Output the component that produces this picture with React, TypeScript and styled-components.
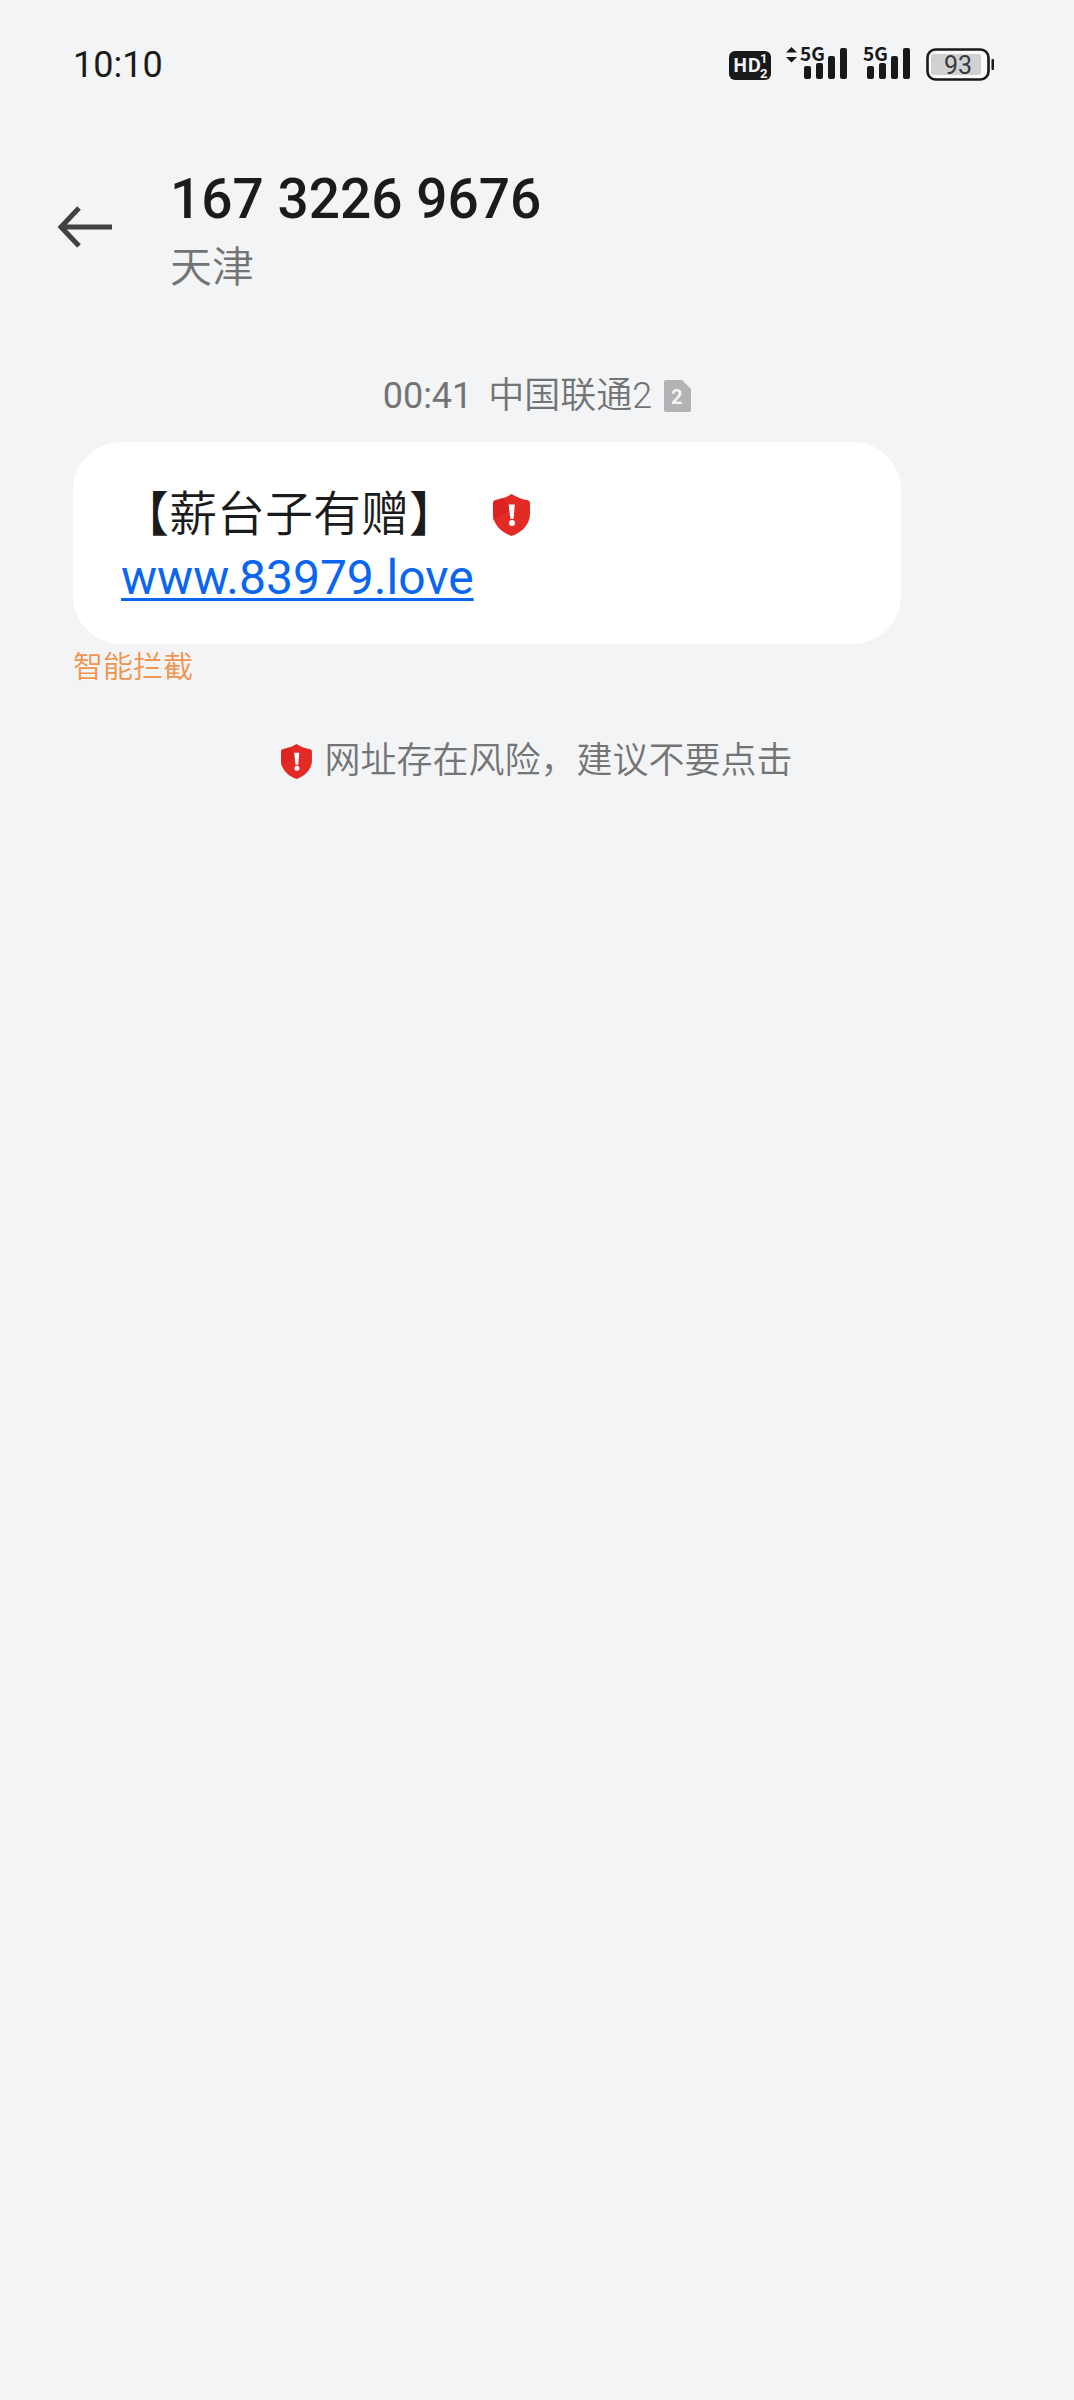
import React from "react";
import styled, { createGlobalStyle } from "styled-components";

const GlobalStyle = createGlobalStyle`
  * { box-sizing: border-box; }
  body {
    margin: 0;
    background: #f2f4f6;
    color: #1a1b1c;
    font-family: Roboto, "Noto Sans CJK SC", sans-serif;
  }
  svg { display: block; flex: none; }
`;

const Screen = styled.div`
  min-height: 100vh;
  background: #f2f4f6;
`;

const StatusBar = styled.div`
  display: flex;
  align-items: center;
  justify-content: space-between;
  height: 130px;
  padding: 0 80px 0 73px;
`;

const Clock = styled.time`
  font-size: 36px;
  line-height: 44px;
`;

const StatusIcons = styled.div`
  display: flex;
  align-items: center;
  gap: 15px;
`;

const Header = styled.header`
  display: flex;
  align-items: flex-start;
  gap: 56px;
  padding: 34px 56px 0;
`;

const BackButton = styled.button`
  display: flex;
  padding: 42px 0;
  border: 0;
  background: none;
`;

const Contact = styled.div`
  display: flex;
  flex-direction: column;
`;

const Phone = styled.h1`
  margin: 0;
  font-size: 55px;
  font-weight: 500;
  line-height: 70px;
`;

const Region = styled.span`
  font-size: 42px;
  font-weight: 350;
  line-height: 68px;
  color: #737475;
`;

const Thread = styled.main`
  display: flex;
  flex-direction: column;
  padding: 70px 73px 0;
`;

const Stamp = styled.div`
  display: flex;
  align-items: center;
  justify-content: center;
  gap: 12px;
  font-size: 36px;
  line-height: 48px;
  color: #737475;
`;

const StampText = styled.div`
  display: flex;
  gap: 16px;
`;

const Carrier = styled.span`
  font-weight: 350;
`;

const Bubble = styled.article`
  margin: 22px 100px 0 0;
  padding: 41px 48px 35px;
  border-radius: 48px;
  background: #fff;
  font-size: 48px;
  line-height: 63px;
`;

const BubbleLine = styled.div`
  display: flex;
  align-items: center;
  gap: 36px;
  font-weight: 350;
`;

const Link = styled.a`
  color: #0a66f0;
  text-decoration: underline;
  text-decoration-thickness: 3px;
  text-underline-offset: 4px;
`;

const Tag = styled.div`
  font-size: 30px;
  font-weight: 350;
  line-height: 46px;
  color: #f0954f;
`;

const Warning = styled.div`
  display: flex;
  align-items: center;
  justify-content: center;
  gap: 12px;
  margin-top: 46px;
  font-size: 36px;
  font-weight: 350;
  line-height: 50px;
  color: #737475;
`;

const GlyphText = styled.text<{ $size: number }>`
  font-family: "Noto Sans CJK SC", Roboto, sans-serif;
  font-size: ${(p) => p.$size}px;
  font-weight: 700;
`;

const SlotText = styled.text`
  font-family: Roboto, sans-serif;
  font-size: 13px;
  font-weight: 700;
`;

const BatteryText = styled.text`
  font-family: Roboto, sans-serif;
  font-size: 25px;
`;

function Shield({ size }: { size: number }) {
  return (
    <svg width={size} height={Math.round(size * 1.14)} viewBox="0 0 37 42" aria-hidden="true">
      <path d="M18.500 0C24 3.600 30 5.400 35 6.200Q37 6.600 37 9V20C37 30 29 38.500 18.500 42C8 38.500 0 30 0 20V9Q0 6.600 2 6.200C7 5.400 13 3.600 18.500 0Z" fill="#e32a24" />
      <path d="M0 26.500L18 16L10 3.500L2 6.200Q0 6.600 0 9Z" fill="#d5211d" opacity="0.6" />
      <path d="M15.700 10.500H21.800L20.600 24.800H17.300Z" fill="#fff" />
      <circle cx="19" cy="29" r="3" fill="#fff" />
    </svg>
  );
}

function HdIcon() {
  return (
    <svg width="42" height="54" viewBox="0 -9 42 54" aria-label="HD">
      <rect x="0" y="4" width="42" height="29" rx="6" fill="#18191a" />
      <GlyphText x="4" y="25" $size={19} fill="#f2f4f6">HD</GlyphText>
      <SlotText x="31" y="16" fill="#f2f4f6">1</SlotText>
      <SlotText x="31" y="31" fill="#f2f4f6">2</SlotText>
    </svg>
  );
}

function SignalIcon({ active }: { active?: boolean }) {
  const left = active ? 14 : 0;
  return (
    <svg width={48 + left} height="54" viewBox={`0 -9 ${48 + left} 54`} aria-label="5G">
      <g fill="#18191a">
        {active && <path d="M0 5.500L5.500 0L11 5.500ZM0 10L5.500 15.500L11 10Z" />}
        <GlyphText x={left} y="14" $size={19}>5G</GlyphText>
        <rect x={left + 4} y="19" width="7" height="13" rx="2" />
        <rect x={left + 16} y="16" width="7" height="16" rx="2" />
        <rect x={left + 28} y="9" width="7" height="23" rx="2" />
        <rect x={left + 40} y="1" width="7" height="31" rx="2" />
      </g>
    </svg>
  );
}

function BatteryIcon() {
  return (
    <svg width="68" height="54" viewBox="0 -9 68 54" aria-label="93">
      <rect x="1.500" y="2.500" width="61" height="30" rx="8" fill="#f8f9fa" stroke="#18191a" strokeWidth="2.600" />
      <rect x="5" y="7" width="50" height="21" rx="3" fill="#d0d1d2" />
      <rect x="65.500" y="12" width="2.500" height="11" rx="1" fill="#18191a" />
      <BatteryText x="18" y="27" fill="#3a3b3c">93</BatteryText>
    </svg>
  );
}

function BackIcon() {
  return (
    <svg width="58" height="42" viewBox="0 0 58 42" aria-hidden="true">
      <path d="M23 2L5 21L23 40M5 21H56" fill="none" stroke="#404142" strokeWidth="5" />
    </svg>
  );
}

function SimIcon() {
  return (
    <svg width="27" height="32" viewBox="0 0 27 32" aria-label="SIM 2">
      <path d="M2 0H18L27 9V30Q27 32 25 32H2Q0 32 0 30V2Q0 0 2 0Z" fill="#b2b3b4" />
      <text x="7" y="24" fill="#f2f4f6" fontSize="20" fontWeight="700">2</text>
    </svg>
  );
}

export default function App() {
  return (
    <Screen>
      <GlobalStyle />
      <StatusBar>
        <Clock>10:10</Clock>
        <StatusIcons>
          <HdIcon />
          <SignalIcon active />
          <SignalIcon />
          <BatteryIcon />
        </StatusIcons>
      </StatusBar>
      <Header>
        <BackButton type="button" aria-label="返回">
          <BackIcon />
        </BackButton>
        <Contact>
          <Phone>167 3226 9676</Phone>
          <Region>天津</Region>
        </Contact>
      </Header>
      <Thread>
        <Stamp>
          <StampText>
            <time>00:41</time>
            <Carrier>中国联通2</Carrier>
          </StampText>
          <SimIcon />
        </Stamp>
        <Bubble>
          <BubbleLine>
            <span>【薪台子有赠】</span>
            <Shield size={37} />
          </BubbleLine>
          <Link href="#">www.83979.love</Link>
        </Bubble>
        <Tag>智能拦截</Tag>
        <Warning>
          <Shield size={31} />
          <span>网址存在风险，建议不要点击</span>
        </Warning>
      </Thread>
    </Screen>
  );
}
